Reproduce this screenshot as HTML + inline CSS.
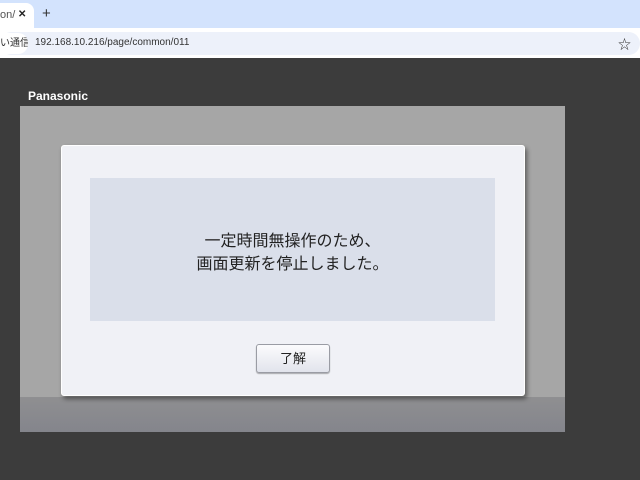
<!DOCTYPE html><html><head><style>
body{margin:0;width:640px;height:480px;overflow:hidden;background:#3c3c3c;font-family:"Liberation Sans","Noto Sans CJK JP",sans-serif;position:relative}
div{position:absolute;box-sizing:border-box}
</style></head><body>
<div style="left:0;top:0;width:640px;height:28px;background:#d3e3fd"></div>
<div style="left:0;top:3px;width:34px;height:27px;background:#fff;border-radius:0 8px 0 0;font-size:11px;line-height:24px;color:#555">on/<span style="position:absolute;left:18px;color:#222;font-weight:bold;font-size:10px">✕</span></div>
<div style="left:42px;top:5px;font-size:15px;color:#333">+</div>
<div style="left:0;top:28px;width:640px;height:30px;background:#fff"></div>
<div style="left:0;top:32px;width:640px;height:23px;background:#edf1fa;border-radius:12px"></div>
<div style="left:0;top:33px;width:28px;height:21px;background:#fff;border-radius:0 10px 10px 0;font-size:10px;line-height:21px;color:#333;white-space:nowrap;overflow:hidden">い通信</div>
<div style="left:35px;top:37px;font-size:10px;color:#333">192.168.10.216/page/common/011</div>
<div style="left:618px;top:34px;font-size:13px;color:#333">☆</div>
<div style="left:28px;top:89px;font-size:12px;font-weight:bold;color:#fff">Panasonic</div>
<div style="left:20px;top:106px;width:545px;height:326px;background:#a6a6a6"></div>
<div style="left:20px;top:397px;width:545px;height:35px;background:linear-gradient(#8f8f91,#84858c)"></div>
<div style="left:61px;top:145px;width:464px;height:251px;background:#f0f1f6;border:1px solid #fff;border-radius:3px;box-shadow:2px 3px 5px rgba(0,0,0,.45)"></div>
<div style="left:90px;top:178px;width:405px;height:143px;background:#dadfea;font-size:16px;color:#222;text-align:center;line-height:23px;padding-top:52px">一定時間無操作のため、<br>画面更新を停止しました。</div>
<div style="left:256px;top:344px;width:74px;height:29px;background:linear-gradient(#fbfbfd,#e2e4ec);border:1px solid #9a9ca4;border-radius:3px;box-shadow:0 1px 1px rgba(0,0,0,.3);font-size:13px;text-align:center;line-height:27px;color:#222">了解</div>
</body></html>
